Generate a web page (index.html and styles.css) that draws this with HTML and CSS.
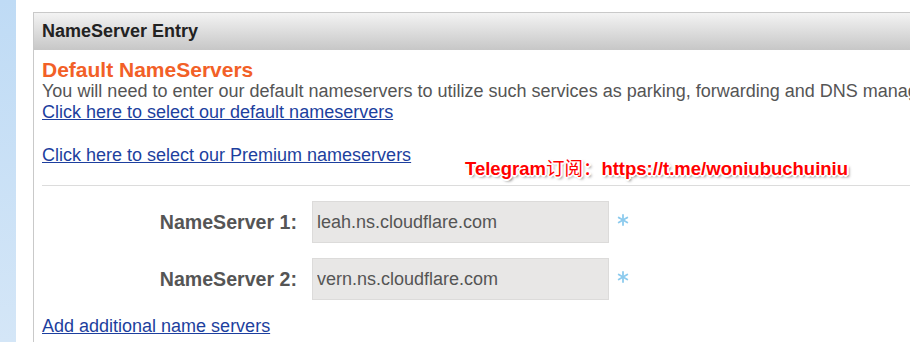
FILE: index.html
```html
<!DOCTYPE html>
<html>
<head>
<meta charset="utf-8">
<link rel="stylesheet" href="styles.css">
</head>
<body>
<div class="page">
  <div class="sidebar"></div>
  <div class="panel">
    <div class="panel-header">NameServer Entry</div>
    <div class="panel-body">
      <h2 class="heading">Default NameServers</h2>
      <p class="intro">You will need to enter our default nameservers to utilize such services as parking, forwarding and DNS management.</p>
      <div class="link-line"><a href="#">Click here to select our default nameservers</a></div>
      <div class="link-line premium"><a href="#">Click here to select our Premium nameservers</a></div>
      <div class="divider"></div>
      <div class="ns-rows">
        <div class="ns-row">
          <label class="ns-label">NameServer 1:</label>
          <input class="ns-input" type="text" value="leah.ns.cloudflare.com">
          <svg class="req" width="12" height="12" viewBox="0 0 12 12"><g stroke="#8dcbee" stroke-width="1.8" stroke-linecap="round"><line x1="6" y1="1" x2="6" y2="11"/><line x1="1.7" y1="3.5" x2="10.3" y2="8.5"/><line x1="1.7" y1="8.5" x2="10.3" y2="3.5"/></g></svg>
        </div>
        <div class="ns-row">
          <label class="ns-label">NameServer 2:</label>
          <input class="ns-input" type="text" value="vern.ns.cloudflare.com">
          <svg class="req" width="12" height="12" viewBox="0 0 12 12"><g stroke="#8dcbee" stroke-width="1.8" stroke-linecap="round"><line x1="6" y1="1" x2="6" y2="11"/><line x1="1.7" y1="3.5" x2="10.3" y2="8.5"/><line x1="1.7" y1="8.5" x2="10.3" y2="3.5"/></g></svg>
        </div>
      </div>
      <div class="link-line add"><a href="#">Add additional name servers</a></div>
    </div>
    <div class="watermark">Telegram<span class="cjk">订阅：</span>https://t.me/woniubuchuiniu</div>
  </div>
</div>
</body>
</html>
```
FILE: styles.css
```css
html, body {
  margin: 0;
  padding: 0;
  background: #fff;
  overflow: hidden;
}
body {
  font-family: "Liberation Sans", Arial, "Noto Sans CJK SC", sans-serif;
  width: 910px;
  height: 342px;
}
.page {
  display: flex;
  align-items: flex-start;
  height: 342px;
}
.sidebar {
  flex: 0 0 16px;
  height: 342px;
  background: linear-gradient(to bottom, #bfdbf5, #d4e6f7);
}
.panel {
  position: relative;
  flex: 0 0 1100px;
  margin-left: 17px;
  margin-top: 12px;
  height: 340px;
  border-top: 1px solid #c9c9c9;
  border-left: 1px solid #c9c9c9;
}
.panel-header {
  height: 37px;
  line-height: 37px;
  padding-left: 8px;
  font-size: 18px;
  font-weight: bold;
  color: #222;
  background: linear-gradient(to bottom, #f3f3f3, #c7c7c7);
}
.panel-body {
  padding: 9px 0 0 8px;
}
.heading {
  margin: 0;
  font-size: 21px;
  line-height: 22px;
  font-weight: bold;
  color: #f26027;
}
.intro {
  margin: 0;
  font-size: 18px;
  line-height: 21px;
  color: #555;
  white-space: nowrap;
}
.link-line {
  font-size: 18px;
  line-height: 21px;
}
.link-line a {
  color: #1d3f9e;
  text-decoration: underline;
}
.premium {
  margin-top: 22px;
}
.divider {
  margin-top: 19px;
  height: 1px;
  background: #dcdcdc;
}
.ns-rows {
  display: flex;
  flex-direction: column;
  gap: 15px;
  margin-top: 15px;
}
.ns-row {
  display: flex;
  align-items: center;
}
.ns-label {
  width: 255px;
  text-align: right;
  font-size: 19.6px;
  font-weight: bold;
  color: #555;
  margin-right: 15px;
}
.ns-input {
  box-sizing: border-box;
  width: 297px;
  height: 42px;
  margin: 0;
  padding: 0 0 0 4px;
  border: 1px solid #dcdbda;
  background: #e8e7e6;
  font-family: "Liberation Sans", Arial, sans-serif;
  font-size: 18px;
  color: #555;
  outline: none;
}
.req {
  margin-left: 8px;
  margin-top: -5px;
}
.add {
  margin-top: 16px;
}
.watermark {
  position: absolute;
  left: 431px;
  top: 147px;
  font-size: 18.5px;
  line-height: 18px;
  font-weight: bold;
  color: #f00;
  white-space: nowrap;
  text-shadow:
    -1px -1px 0 #fff, 1px -1px 0 #fff, -1px 1px 0 #fff, 1px 1px 0 #fff,
    0 -2px 0 #fff, 0 2px 0 #fff, -2px 0 0 #fff, 2px 0 0 #fff,
    2px 2px 3px rgba(0,0,0,0.6);
}
.cjk {
  font-weight: normal;
}
```
